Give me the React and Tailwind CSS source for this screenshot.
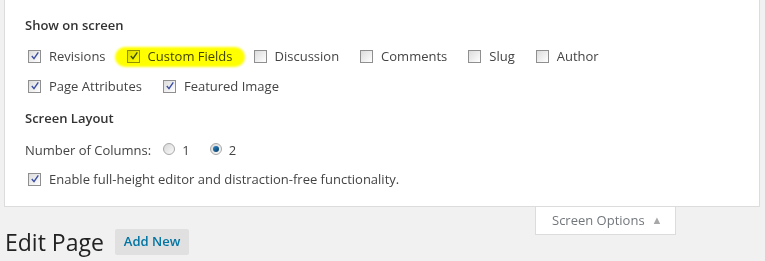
import React from "react";

function Box({ checked }) {
  return (
    <span className="relative inline-block w-[13px] h-[13px] border border-[#8f8f8f] bg-gradient-to-br from-[#dcdcdc] to-[#ffffff] shrink-0">
      {checked && (
        <svg className="absolute left-[1px] top-[0px]" width="10" height="10" viewBox="0 0 10 10">
          <path d="M1.8 5 L4 7.6 L8.3 1.3" fill="none" stroke="#3b4ea3" strokeWidth="1.4" />
        </svg>
      )}
    </span>
  );
}

function Check({ label, checked, last, highlight }) {
  return (
    <span className={`relative flex items-center h-5 ${last ? "" : "mr-[18px]"}`}>
      <span className="ml-[3px]">
        <Box checked={checked} />
      </span>
      <span className="ml-[8px] text-[13px] text-[#444]">{label}</span>
      {highlight && (
        <span className="absolute left-[-9px] right-[-12px] top-0 bottom-0 rounded-full bg-[#ffff00] mix-blend-multiply blur-[1px] pointer-events-none" />
      )}
    </span>
  );
}

function Radio({ checked }) {
  return (
    <span className="relative inline-block w-[12px] h-[12px] rounded-full border border-[#a8a8a8] bg-gradient-to-br from-[#d8d8d8] to-[#fafafa] shrink-0">
      {checked && (
        <span className="absolute left-[2px] top-[2px] w-[6px] h-[6px] rounded-full bg-gradient-to-br from-[#2a8bd0] to-[#0b3a5f]" />
      )}
    </span>
  );
}

export default function App() {
  return (
    <div className="w-[765px] h-[261px] bg-[#f1f1f1] overflow-hidden" style={{ fontFamily: '"Open Sans", "Liberation Sans", sans-serif' }}>
      <div className="ml-[4px] w-[756px] bg-white border-x border-b border-[#dcdcdc] px-[20px] pt-[16px] pb-[16px] text-[#444]">
        <div className="h-5 flex items-center text-[13px] font-semibold text-[#333]">Show on screen</div>
        <div className="mt-[11px] flex">
          <Check label="Revisions" checked />
          <Check label="Custom Fields" checked highlight />
          <Check label="Discussion" />
          <Check label="Comments" />
          <Check label="Slug" />
          <Check label="Author" last />
        </div>
        <div className="mt-[10px] flex">
          <Check label="Page Attributes" checked />
          <Check label="Featured Image" checked last />
        </div>
        <div className="mt-[12px] h-5 flex items-center text-[13px] font-semibold text-[#333]">Screen Layout</div>
        <div className="mt-[12px] h-5 flex items-center text-[13px]">
          <span>Number of Columns:</span>
          <span className="ml-[12px]"><Radio /></span>
          <span className="ml-[7px]">1</span>
          <span className="ml-[20px]"><Radio checked /></span>
          <span className="ml-[7px]">2</span>
        </div>
        <div className="mt-[9px] flex">
          <Check label="Enable full-height editor and distraction-free functionality." checked last />
        </div>
      </div>
      <div className="flex justify-between items-start w-[760px]">
        <div className="pt-[22px] pl-[5px] flex items-center">
          <h1 className="text-[23px] leading-[26px] text-[#222]">Edit Page</h1>
          <span className="ml-[11px] h-[26px] px-[9px] flex items-center bg-[#e0e0e0] rounded-[2px] text-[13px] font-semibold text-[#0074a2]">Add New</span>
        </div>
        <div className="mr-[84px] w-[141px] h-[28px] bg-white border-x border-b border-[#dcdcdc] flex items-center pl-[16px] text-[13px] text-[#72777c]">
          <span className="pt-[1px]">Screen Options</span>
          <span className="ml-[7px] text-[11px] text-[#a8a8a8]">▲</span>
        </div>
      </div>
    </div>
  );
}
